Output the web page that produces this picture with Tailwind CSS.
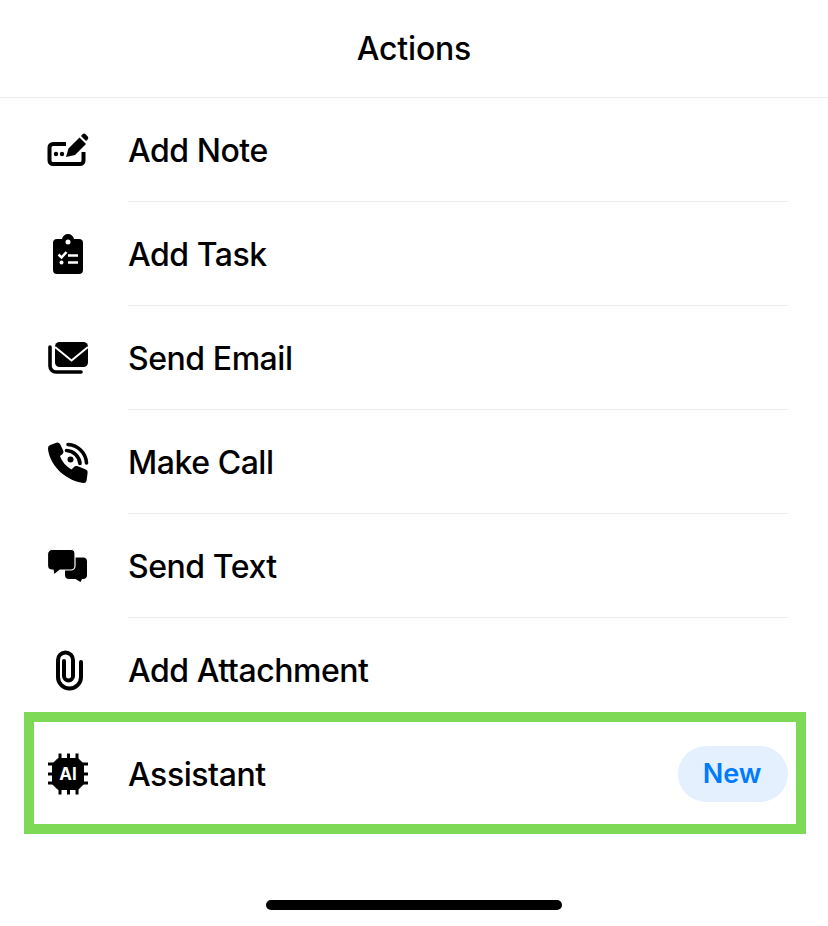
<!DOCTYPE html>
<html lang="en">
<head>
<meta charset="UTF-8">
<title>Actions</title>
<script src="https://cdn.jsdelivr.net/npm/@tailwindcss/browser@4"></script>
</head>
<body class="bg-white text-black font-['Inter',sans-serif] w-[828px] h-[926px] overflow-hidden">
  <!-- header -->
  <header class="h-[98px] flex items-center justify-center border-b border-[#ececee]">
    <h1 class="text-[32px] font-medium tracking-[-0.2px]">Actions</h1>
  </header>

  <ul class="flex flex-col">
    <li class="h-[104px] flex items-center pl-[44px]">
      <svg class="w-[48px] h-[48px] shrink-0" viewBox="0 0 48 48" fill="none">
        <path d="M22 18H9a3.500 3.500 0 0 0-3.500 3.500v13A3.500 3.500 0 0 0 9 38h27a3.500 3.500 0 0 0 3.500-3.500V26" stroke="#000" stroke-width="4"/>
        <circle cx="12" cy="28" r="2.200" fill="#000"/><circle cx="18" cy="28" r="2.200" fill="#000"/>
        <path d="M22 31l2.500-8.500L35.500 11.500l6.500 6.500L31 29z" fill="#000"/>
        <path d="M37 10l1.700-1.700a2 2 0 0 1 2.800 0l2.200 2.200a2 2 0 0 1 0 2.800L42 15z" fill="#000"/>
      </svg>
      <div class="ml-[36px] flex-1 h-full flex items-center pt-[2px] border-b border-[#ececee] mr-[40px] text-[32px] font-[450] tracking-[-0.45px]">Add Note</div>
    </li>
    <li class="h-[104px] flex items-center pl-[44px]">
      <svg class="w-[48px] h-[48px] shrink-0" viewBox="0 0 48 48" fill="none">
        <path fill-rule="evenodd" d="M18 9c.6-3 3-5 6-5s5.400 2 6 5h5a4 4 0 0 1 4 4v27a4 4 0 0 1-4 4H13a4 4 0 0 1-4-4V13a4 4 0 0 1 4-4zM24 9.500a2.500 2.500 0 1 0 0 5 2.500 2.500 0 0 0 0-5z" fill="#000"/>
        <path d="M14.500 24.500l3 3 5-5.500" stroke="#fff" stroke-width="2.500"/>
        <path d="M24 25.500h10M24 32.500h10" stroke="#fff" stroke-width="2.500"/>
        <circle cx="17.500" cy="32.500" r="2" fill="#fff"/>
      </svg>
      <div class="ml-[36px] flex-1 h-full flex items-center pt-[2px] border-b border-[#ececee] mr-[40px] text-[32px] font-[450] tracking-[-0.45px]">Add Task</div>
    </li>
    <li class="h-[104px] flex items-center pl-[44px]">
      <svg class="w-[48px] h-[48px] shrink-0" viewBox="0 0 48 48" fill="none">
        <path d="M6 13v19a6 6 0 0 0 6 6h25" stroke="#000" stroke-width="3.600" stroke-linecap="round"/>
        <rect x="11" y="8" width="33" height="25" rx="4.500" fill="#000"/>
        <path d="M11 13l16.500 13.500L44 13" stroke="#fff" stroke-width="2"/>
      </svg>
      <div class="ml-[36px] flex-1 h-full flex items-center pt-[2px] border-b border-[#ececee] mr-[40px] text-[32px] font-[450] tracking-[-0.45px]">Send Email</div>
    </li>
    <li class="h-[104px] flex items-center pl-[44px]">
      <svg class="w-[48px] h-[48px] shrink-0" viewBox="0 0 48 48" fill="none">
        <path d="M16 18c2 6 6.500 10.500 11.500 13.500l2.500-2.500a3 3 0 0 1 3.200-.9l8.600 3.400a3 3 0 0 1 1.800 3.400l-1 7.500a3 3 0 0 1-3.500 2.500C19 42 5 25 4 10.500a3.500 3.500 0 0 1 2.300-3.500l6-2.300a3 3 0 0 1 3.700 1.400l3.200 6.500a3 3 0 0 1-.6 3.400z" fill="#000"/>
        <path d="M24 6.500c10 .5 18 8.500 18.500 18.500M22.500 12.500c7 .3 13 6 13.500 13" stroke="#000" stroke-width="3.600" stroke-linecap="round"/>
        <circle cx="26.500" cy="21.500" r="3" fill="#000"/>
      </svg>
      <div class="ml-[36px] flex-1 h-full flex items-center pt-[2px] border-b border-[#ececee] mr-[40px] text-[32px] font-[450] tracking-[-0.45px]">Make Call</div>
    </li>
    <li class="h-[104px] flex items-center pl-[44px]">
      <svg class="w-[48px] h-[48px] shrink-0" viewBox="0 0 48 48" fill="none">
        <path d="M25 15.500h14a4 4 0 0 1 4 4V33a4 4 0 0 1-4 4h-1l-1.500 3-5-3H25a4 4 0 0 1-4-4V19.500a4 4 0 0 1 4-4z" fill="#000"/>
        <path d="M8 7.500h19a4 4 0 0 1 4 4V24a4 4 0 0 1-4 4H16l-6 5-1-5H8a4.500 4.500 0 0 1-4.500-4.500V12A4.500 4.500 0 0 1 8 7.500z" fill="#000" stroke="#fff" stroke-width="1.200"/>
      </svg>
      <div class="ml-[36px] flex-1 h-full flex items-center pt-[2px] border-b border-[#ececee] mr-[40px] text-[32px] font-[450] tracking-[-0.45px]">Send Text</div>
    </li>
    <li class="h-[104px] flex items-center pl-[44px]">
      <svg class="w-[48px] h-[48px] shrink-0 -translate-x-px" viewBox="0 0 48 48" fill="none">
        <path d="M38 16V31A11.500 11.500 0 0 1 15 31V14A7.500 7.500 0 0 1 30 14V30A4.500 4.500 0 0 1 21 30V15" stroke="#000" stroke-width="4" stroke-linecap="round"/>
      </svg>
      <div class="ml-[36px] flex-1 h-full flex items-center pt-px mr-[40px] text-[32px] font-[450] tracking-[-0.45px]">Add Attachment</div>
    </li>
    <!-- highlighted row -->
    <li class="relative h-[104px] flex items-center pl-[44px]">
      <svg class="w-[48px] h-[48px] shrink-0" viewBox="0 0 48 48" fill="none">
        <path d="M16 3.500v41M24.500 3.500v41M33 3.500v41M4 14h40M4 24h40M4 33h40" stroke="#000" stroke-width="3"/>
        <path d="M14 8.500h20l5.500 5.500v20L34 39.500H14L8.500 34V14z" fill="#000" stroke="#000" stroke-width="1" stroke-linejoin="round"/>
        <text x="24" y="30" text-anchor="middle" fill="#fff" font-family="Inter" font-weight="700" font-size="17">AI</text>
      </svg>
      <div class="ml-[36px] flex-1 h-full flex items-center pt-px justify-between mr-[40px] text-[32px] font-[450] tracking-[-0.45px]">
        <span>Assistant</span>
        <span class="-mt-px w-[110px] h-[56px] pr-[2px] rounded-full bg-[#e5f0fe] text-[#007aff] text-[27px] font-[570] tracking-normal flex items-center justify-center">New</span>
      </div>
      <div class="absolute left-[24px] top-[-10px] w-[782px] h-[122px] border-[10px] border-[#7ed957] pointer-events-none"></div>
    </li>
  </ul>

  <div class="mt-[74px] mx-auto w-[296px] h-[10px] rounded-full bg-black"></div>
</body>
</html>
